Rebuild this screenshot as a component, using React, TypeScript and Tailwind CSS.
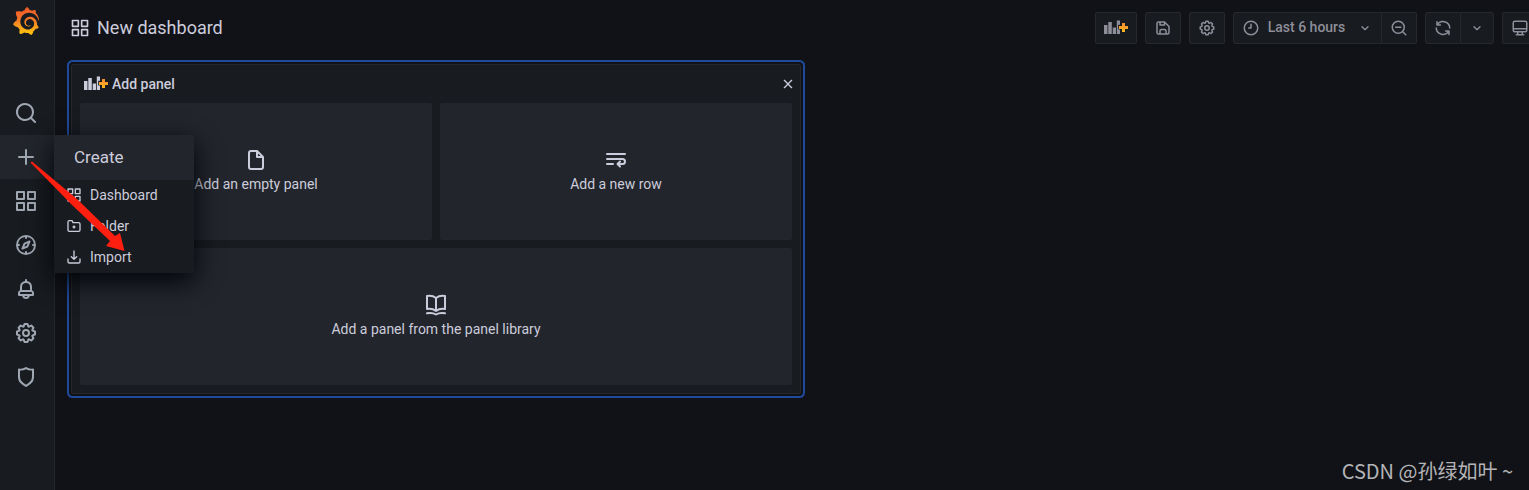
import type { ReactNode } from "react";
import { SiGrafana } from "react-icons/si";

const paths = {
  search:
    "M21.71,20.29,18,16.61A9,9,0,1,0,16.61,18l3.68,3.68a1,1,0,0,0,1.42,0A1,1,0,0,0,21.71,20.29ZM11,18a7,7,0,1,1,7-7A7,7,0,0,1,11,18Z",
  plus: "M19,11H13V5a1,1,0,0,0-2,0v6H5a1,1,0,0,0,0,2h6v6a1,1,0,0,0,2,0V13h6a1,1,0,0,0,0-2Z",
  apps: "M10,13H3a1,1,0,0,0-1,1v7a1,1,0,0,0,1,1h7a1,1,0,0,0,1-1V14A1,1,0,0,0,10,13ZM9,20H4V15H9ZM21,2H14a1,1,0,0,0-1,1v7a1,1,0,0,0,1,1h7a1,1,0,0,0,1-1V3A1,1,0,0,0,21,2ZM20,9H15V4h5Zm1,4H14a1,1,0,0,0-1,1v7a1,1,0,0,0,1,1h7a1,1,0,0,0,1-1V14A1,1,0,0,0,21,13Zm-1,7H15V15h5ZM10,2H3A1,1,0,0,0,2,3v7a1,1,0,0,0,1,1h7a1,1,0,0,0,1-1V3A1,1,0,0,0,10,2ZM9,9H4V4H9Z",
  compass:
    "M12,2A10,10,0,1,0,22,12,10,10,0,0,0,12,2Zm1,17.93V19a1,1,0,0,0-2,0v.93A8,8,0,0,1,4.07,13H5a1,1,0,0,0,0-2H4.07A8,8,0,0,1,11,4.07V5a1,1,0,0,0,2,0V4.07A8,8,0,0,1,19.93,11H19a1,1,0,0,0,0,2h.93A8,8,0,0,1,13,19.93ZM15.14,7.55l-5,2.12a1,1,0,0,0-.52.52l-2.12,5a1,1,0,0,0,.21,1.1,1,1,0,0,0,.7.3.93.93,0,0,0,.4-.09l5-2.12a1,1,0,0,0,.52-.52l2.12-5a1,1,0,0,0-1.31-1.31Zm-2.49,5.1-2.28,1,1-2.28,2.28-1Z",
  bell: "M18,13.18V10a6,6,0,0,0-5-5.91V3a1,1,0,0,0-2,0V4.09A6,6,0,0,0,6,10v3.18A3,3,0,0,0,4,16v2a1,1,0,0,0,1,1H8.14a4,4,0,0,0,7.72,0H19a1,1,0,0,0,1-1V16A3,3,0,0,0,18,13.18ZM8,10a4,4,0,0,1,8,0v3H8Zm4,10a2,2,0,0,1-1.72-1h3.44A2,2,0,0,1,12,20Zm6-3H6V16a1,1,0,0,1,1-1H17a1,1,0,0,1,1,1Z",
  cog: "M21.32,9.55l-1.89-.63.89-1.78A1,1,0,0,0,20.13,6L18,3.87a1,1,0,0,0-1.15-.19l-1.78.89-.63-1.89A1,1,0,0,0,13.5,2h-3a1,1,0,0,0-.95.68L8.92,4.57,7.14,3.68A1,1,0,0,0,6,3.87L3.87,6a1,1,0,0,0-.19,1.15l.89,1.78-1.89.63A1,1,0,0,0,2,10.5v3a1,1,0,0,0,.68.95l1.89.63-.89,1.78A1,1,0,0,0,3.87,18L6,20.13a1,1,0,0,0,1.15.19l1.78-.89.63,1.89a1,1,0,0,0,.95.68h3a1,1,0,0,0,.95-.68l.63-1.89,1.78.89A1,1,0,0,0,18,20.13L20.13,18a1,1,0,0,0,.19-1.15l-.89-1.78,1.89-.63A1,1,0,0,0,22,13.5v-3A1,1,0,0,0,21.32,9.55ZM20,12.78l-1.2.4A2,2,0,0,0,17.64,16l.57,1.14-1.1,1.1L16,17.64a2,2,0,0,0-2.79,1.16l-.4,1.2H11.22l-.4-1.2A2,2,0,0,0,8,17.64l-1.14.57-1.1-1.1L6.36,16A2,2,0,0,0,5.2,13.18L4,12.78V11.22l1.2-.4A2,2,0,0,0,6.36,8L5.79,6.89l1.1-1.1L8,6.36A2,2,0,0,0,10.82,5.2l.4-1.2h1.56l.4,1.2A2,2,0,0,0,16,6.36l1.14-.57,1.1,1.1L17.64,8a2,2,0,0,0,1.16,2.79l1.2.4ZM12,8a4,4,0,1,0,4,4A4,4,0,0,0,12,8Zm0,6a2,2,0,1,1,2-2A2,2,0,0,1,12,14Z",
  shield:
    "M19.63,3.65a1,1,0,0,0-.84-.2,8,8,0,0,1-6.22-1.27,1,1,0,0,0-1.14,0A8,8,0,0,1,5.21,3.45a1,1,0,0,0-.84.2A1,1,0,0,0,4,4.43v7.45a9,9,0,0,0,3.77,7.33l3.65,2.6a1,1,0,0,0,1.16,0l3.65-2.6A9,9,0,0,0,20,11.88V4.43A1,1,0,0,0,19.63,3.65ZM18,11.88a7,7,0,0,1-2.93,5.7L12,19.77,8.93,17.58A7,7,0,0,1,6,11.88V5.58a10,10,0,0,0,6-1.39,10,10,0,0,0,6,1.39Z",
  file: "M20,8.94a1.31,1.31,0,0,0-.06-.27l0-.09a1.07,1.07,0,0,0-.19-.28h0l-6-6h0a1.07,1.07,0,0,0-.28-.19l-.09,0L13.06,2H7A3,3,0,0,0,4,5V19a3,3,0,0,0,3,3H17a3,3,0,0,0,3-3V9S20,9,20,8.94ZM14,5.41,16.59,8H14ZM18,19a1,1,0,0,1-1,1H7a1,1,0,0,1-1-1V5A1,1,0,0,1,7,4h5V9a1,1,0,0,0,1,1h5Z",
  save: "M20.71,9.29l-6-6a1,1,0,0,0-.32-.21A1.09,1.09,0,0,0,14,3H6A3,3,0,0,0,3,6V18a3,3,0,0,0,3,3H18a3,3,0,0,0,3-3V10A1,1,0,0,0,20.71,9.29ZM9,5h4V7H9Zm6,14H9V16a1,1,0,0,1,1-1h4a1,1,0,0,1,1,1Zm4-1a1,1,0,0,1-1,1H17V16a3,3,0,0,0-3-3H10a3,3,0,0,0-3,3v3H6a1,1,0,0,1-1-1V6A1,1,0,0,1,6,5H7V8A1,1,0,0,0,8,9h6a1,1,0,0,0,1-1V6.41l4,4Z"
};

const strokes = {
  folder: "M3 6a2 2 0 0 1 2-2h4.300l1.200 3H19a2 2 0 0 1 2 2v9a2 2 0 0 1-2 2H5a2 2 0 0 1-2-2ZM12 12v3M10.500 13.500h3",
  import: "M12 3v12M8 11.500l4 4 4-4M3 15v4a2 2 0 0 0 2 2h14a2 2 0 0 0 2-2v-4",
  wrap: "M3 6h18M3 11h15.500a2.500 2.500 0 0 1 0 5H14M3 16h6M16 13.500 13.500 16l2.500 2.500",
  book: "M12 5C9.500 3 6 2.500 3 3v13c3-.5 6.500 0 9 2 2.500-2 6-2.500 9-2V3c-3-.5-6.500 0-9 2v13M3 20.300c3-.5 6.500-.3 9 1.200 2.500-1.500 6-1.700 9-1.200",
  clock: "M12 3a9 9 0 1 0 0 18 9 9 0 0 0 0-18ZM12 7v5H9",
  zoomOut: "M11 3a8 8 0 1 0 0 16 8 8 0 0 0 0-16ZM17 17l4 4M7.500 11h7",
  sync: "M4 3.500v4.500h4.500M4.200 8A9 9 0 0 1 21 12M20 20.500V16h-4.500M19.800 16A9 9 0 0 1 3 12",
  monitor: "M5 3h14a2 2 0 0 1 2 2v10a2 2 0 0 1-2 2H5a2 2 0 0 1-2-2V5a2 2 0 0 1 2-2ZM3 13h18M9 17v4M15 17v4M7 21h10",
  down: "M7.500 10l4.500 4.500 4.500-4.500",
  close: "M6.500 6.500l11 11M17.500 6.500l-11 11"
};

const Icon = ({ name, className }: { name: keyof typeof paths; className: string }) => (
  <svg viewBox="0 0 24 24" fill="currentColor" className={className} aria-hidden="true">
    <path d={paths[name]} />
  </svg>
);

const LineIcon = ({ name, className }: { name: keyof typeof strokes; className: string }) => (
  <svg
    viewBox="0 0 24 24"
    fill="none"
    stroke="currentColor"
    strokeWidth="2"
    strokeLinecap="round"
    strokeLinejoin="round"
    className={className}
    aria-hidden="true"
  >
    <path d={strokes[name]} />
  </svg>
);

const PanelAddIcon = () => (
  <svg viewBox="0 0 24 16" className="h-4 w-6 shrink-0" aria-hidden="true">
    <defs>
      <linearGradient id="plus" x1="0" y1="0" x2="0" y2="1">
        <stop offset="0" stopColor="#f58a35" />
        <stop offset="1" stopColor="#fbb91a" />
      </linearGradient>
    </defs>
    <path
      fill="currentColor"
      d="M0 5h3.500v9H0ZM4.300 2h3.500v12H4.300ZM8.700 7.500h3.300V14H8.700ZM12.800 0.500h3.200V4.800H14.200V9.500H16V14H12.800Z"
    />
    <path fill="url(#plus)" d="M18 3h3v3h3v3h-3v3h-3V9h-3V6h3Z" />
  </svg>
);

const navItems: { name: keyof typeof paths; label: string }[] = [
  { name: "search", label: "Search" },
  { name: "plus", label: "Create" },
  { name: "apps", label: "Dashboards" },
  { name: "compass", label: "Explore" },
  { name: "bell", label: "Alerting" },
  { name: "cog", label: "Configuration" },
  { name: "shield", label: "Server admin" }
];

const CreateMenu = () => (
  <div className="absolute left-full top-0 z-20 w-[140px] bg-[#181b1f] text-[#ccccdc] shadow-[0_8px_24px_rgb(1,4,9)]">
    <div className="flex h-[45px] items-center bg-[#22252b] px-5 text-[17px]">Create</div>
    <ul>
      {[
        { label: "Dashboard", icon: <Icon name="apps" className="size-4" /> },
        { label: "Folder", icon: <LineIcon name="folder" className="size-4" /> },
        { label: "Import", icon: <LineIcon name="import" className="size-4" /> }
      ].map((item) => (
        <li key={item.label}>
          <a href="#" className="flex h-[31px] items-center gap-2 px-3 pb-[2px] text-sm">
            {item.icon}
            {item.label}
          </a>
        </li>
      ))}
    </ul>
    {/* pointer from the plus button down to Import */}
    <svg viewBox="0 0 100 94" className="pointer-events-none absolute -left-6 top-6 h-[94px] w-[100px]">
      <path fill="#ff1f10" d="M0.500 3.500 2 2.500 47 40 85 77 90 74 94.500 92 76 87 80 82 41 45 Z" />
    </svg>
  </div>
);

const Sidebar = () => (
  <nav className="flex w-[55px] shrink-0 flex-col border-r border-[#25272c] bg-[#181b1f] text-[#9fa7b3]">
    <a href="#" aria-label="Home" className="mb-[49px] flex h-[42px] w-[52px] items-center justify-center">
      <svg className="size-0 absolute" aria-hidden="true">
        <linearGradient id="logo" x1="0" y1="0" x2="0" y2="1">
          <stop offset="0" stopColor="#f05a28" />
          <stop offset="0.4" stopColor="#f3702a" />
          <stop offset="1" stopColor="#fcc90b" />
        </linearGradient>
      </svg>
      <SiGrafana fill="url(#logo)" className="size-7" />
    </a>
    {navItems.map((item) => (
      <div key={item.name} className={"relative " + (item.name === "plus" ? "bg-[#22252b]" : "")}>
        <button type="button" aria-label={item.label} className="flex h-11 w-[52px] items-center justify-center">
          <Icon name={item.name} className="size-6" />
        </button>
        {item.name === "plus" && <CreateMenu />}
      </div>
    ))}
  </nav>
);

const ToolButton = ({ label, className, children }: { label: string; className: string; children: ReactNode }) => (
  <button
    type="button"
    aria-label={label}
    className={"flex h-8 shrink-0 items-center justify-center border border-[#26282d] bg-[#181b1f] " + className}
  >
    {children}
  </button>
);

const Toolbar = () => (
  <div className="-mr-[9px] flex shrink-0 gap-2 text-[#8e8e9a]">
    <ToolButton label="Add panel" className="w-[42px] rounded-xs">
      <PanelAddIcon />
    </ToolButton>
    <ToolButton label="Save dashboard" className="w-9 rounded-xs">
      <Icon name="save" className="size-[18px]" />
    </ToolButton>
    <ToolButton label="Dashboard settings" className="w-9 rounded-xs">
      <Icon name="cog" className="size-[18px]" />
    </ToolButton>
    <div className="flex">
      <ToolButton label="Time range" className="w-[149px] rounded-l-xs">
        <LineIcon name="clock" className="size-[18px]" />
        <span className="ml-2 mr-3 pb-[2px] text-sm font-medium">Last 6 hours</span>
        <LineIcon name="down" className="size-4" />
      </ToolButton>
      <ToolButton label="Zoom out" className="-ml-px w-9 rounded-r-xs">
        <LineIcon name="zoomOut" className="size-[18px]" />
      </ToolButton>
    </div>
    <div className="flex">
      <ToolButton label="Refresh" className="w-9 rounded-l-xs">
        <LineIcon name="sync" className="size-[18px]" />
      </ToolButton>
      <ToolButton label="Refresh interval" className="-ml-px w-[34px] rounded-r-xs">
        <LineIcon name="down" className="size-4" />
      </ToolButton>
    </div>
    <ToolButton label="Cycle view mode" className="w-9 rounded-xs">
      <LineIcon name="monitor" className="size-[18px]" />
    </ToolButton>
  </div>
);

const Choice = ({ label, className, children }: { label: string; className?: string; children: ReactNode }) => (
  <button
    type="button"
    className={
      "flex h-[137px] flex-col items-center justify-center gap-px rounded-xs bg-[#22252b] pb-px text-sm leading-[22px] " +
      (className ?? "")
    }
  >
    {children}
    {label}
  </button>
);

const AddPanel = () => (
  <section className="mx-4 mt-5 w-1/2 max-w-[730px] rounded-xs border border-[#25272c] bg-[#181b1f] px-2 pb-2 shadow-[0_0_0_2px_#111217,0_0_0_4px_#1f4a9a]">
    <header className="-mr-1 flex h-[38px] items-center gap-1 pl-1 text-sm font-medium">
      <PanelAddIcon />
      <h2 className="flex-1">Add panel</h2>
      <button type="button" aria-label="Close">
        <LineIcon name="close" className="size-4" />
      </button>
    </header>
    <div className="grid grid-cols-2 gap-2">
      <Choice label="Add an empty panel">
        <Icon name="file" className="size-6" />
      </Choice>
      <Choice label="Add a new row">
        <LineIcon name="wrap" className="size-6" />
      </Choice>
      <Choice label="Add a panel from the panel library" className="col-span-2">
        <LineIcon name="book" className="size-6" />
      </Choice>
    </div>
  </section>
);

export default function App() {
  return (
    <div className="relative flex min-h-screen overflow-hidden bg-[#111217] font-['Roboto',sans-serif] text-[#ccccdc]">
      <Sidebar />
      <main className="min-w-0 flex-1">
        <header className="flex h-11 items-end justify-between pl-[15px]">
          <h1 className="flex h-8 items-center gap-[7px] text-lg">
            <Icon name="apps" className="size-5" />
            New dashboard
          </h1>
          <Toolbar />
        </header>
        <AddPanel />
      </main>
      <p className="absolute bottom-1 right-4 font-['Noto_Sans_CJK_SC',sans-serif] text-xl leading-[30px] text-[#b4b4b6]">
        CSDN @孙绿如叶 ~
      </p>
    </div>
  );
}
